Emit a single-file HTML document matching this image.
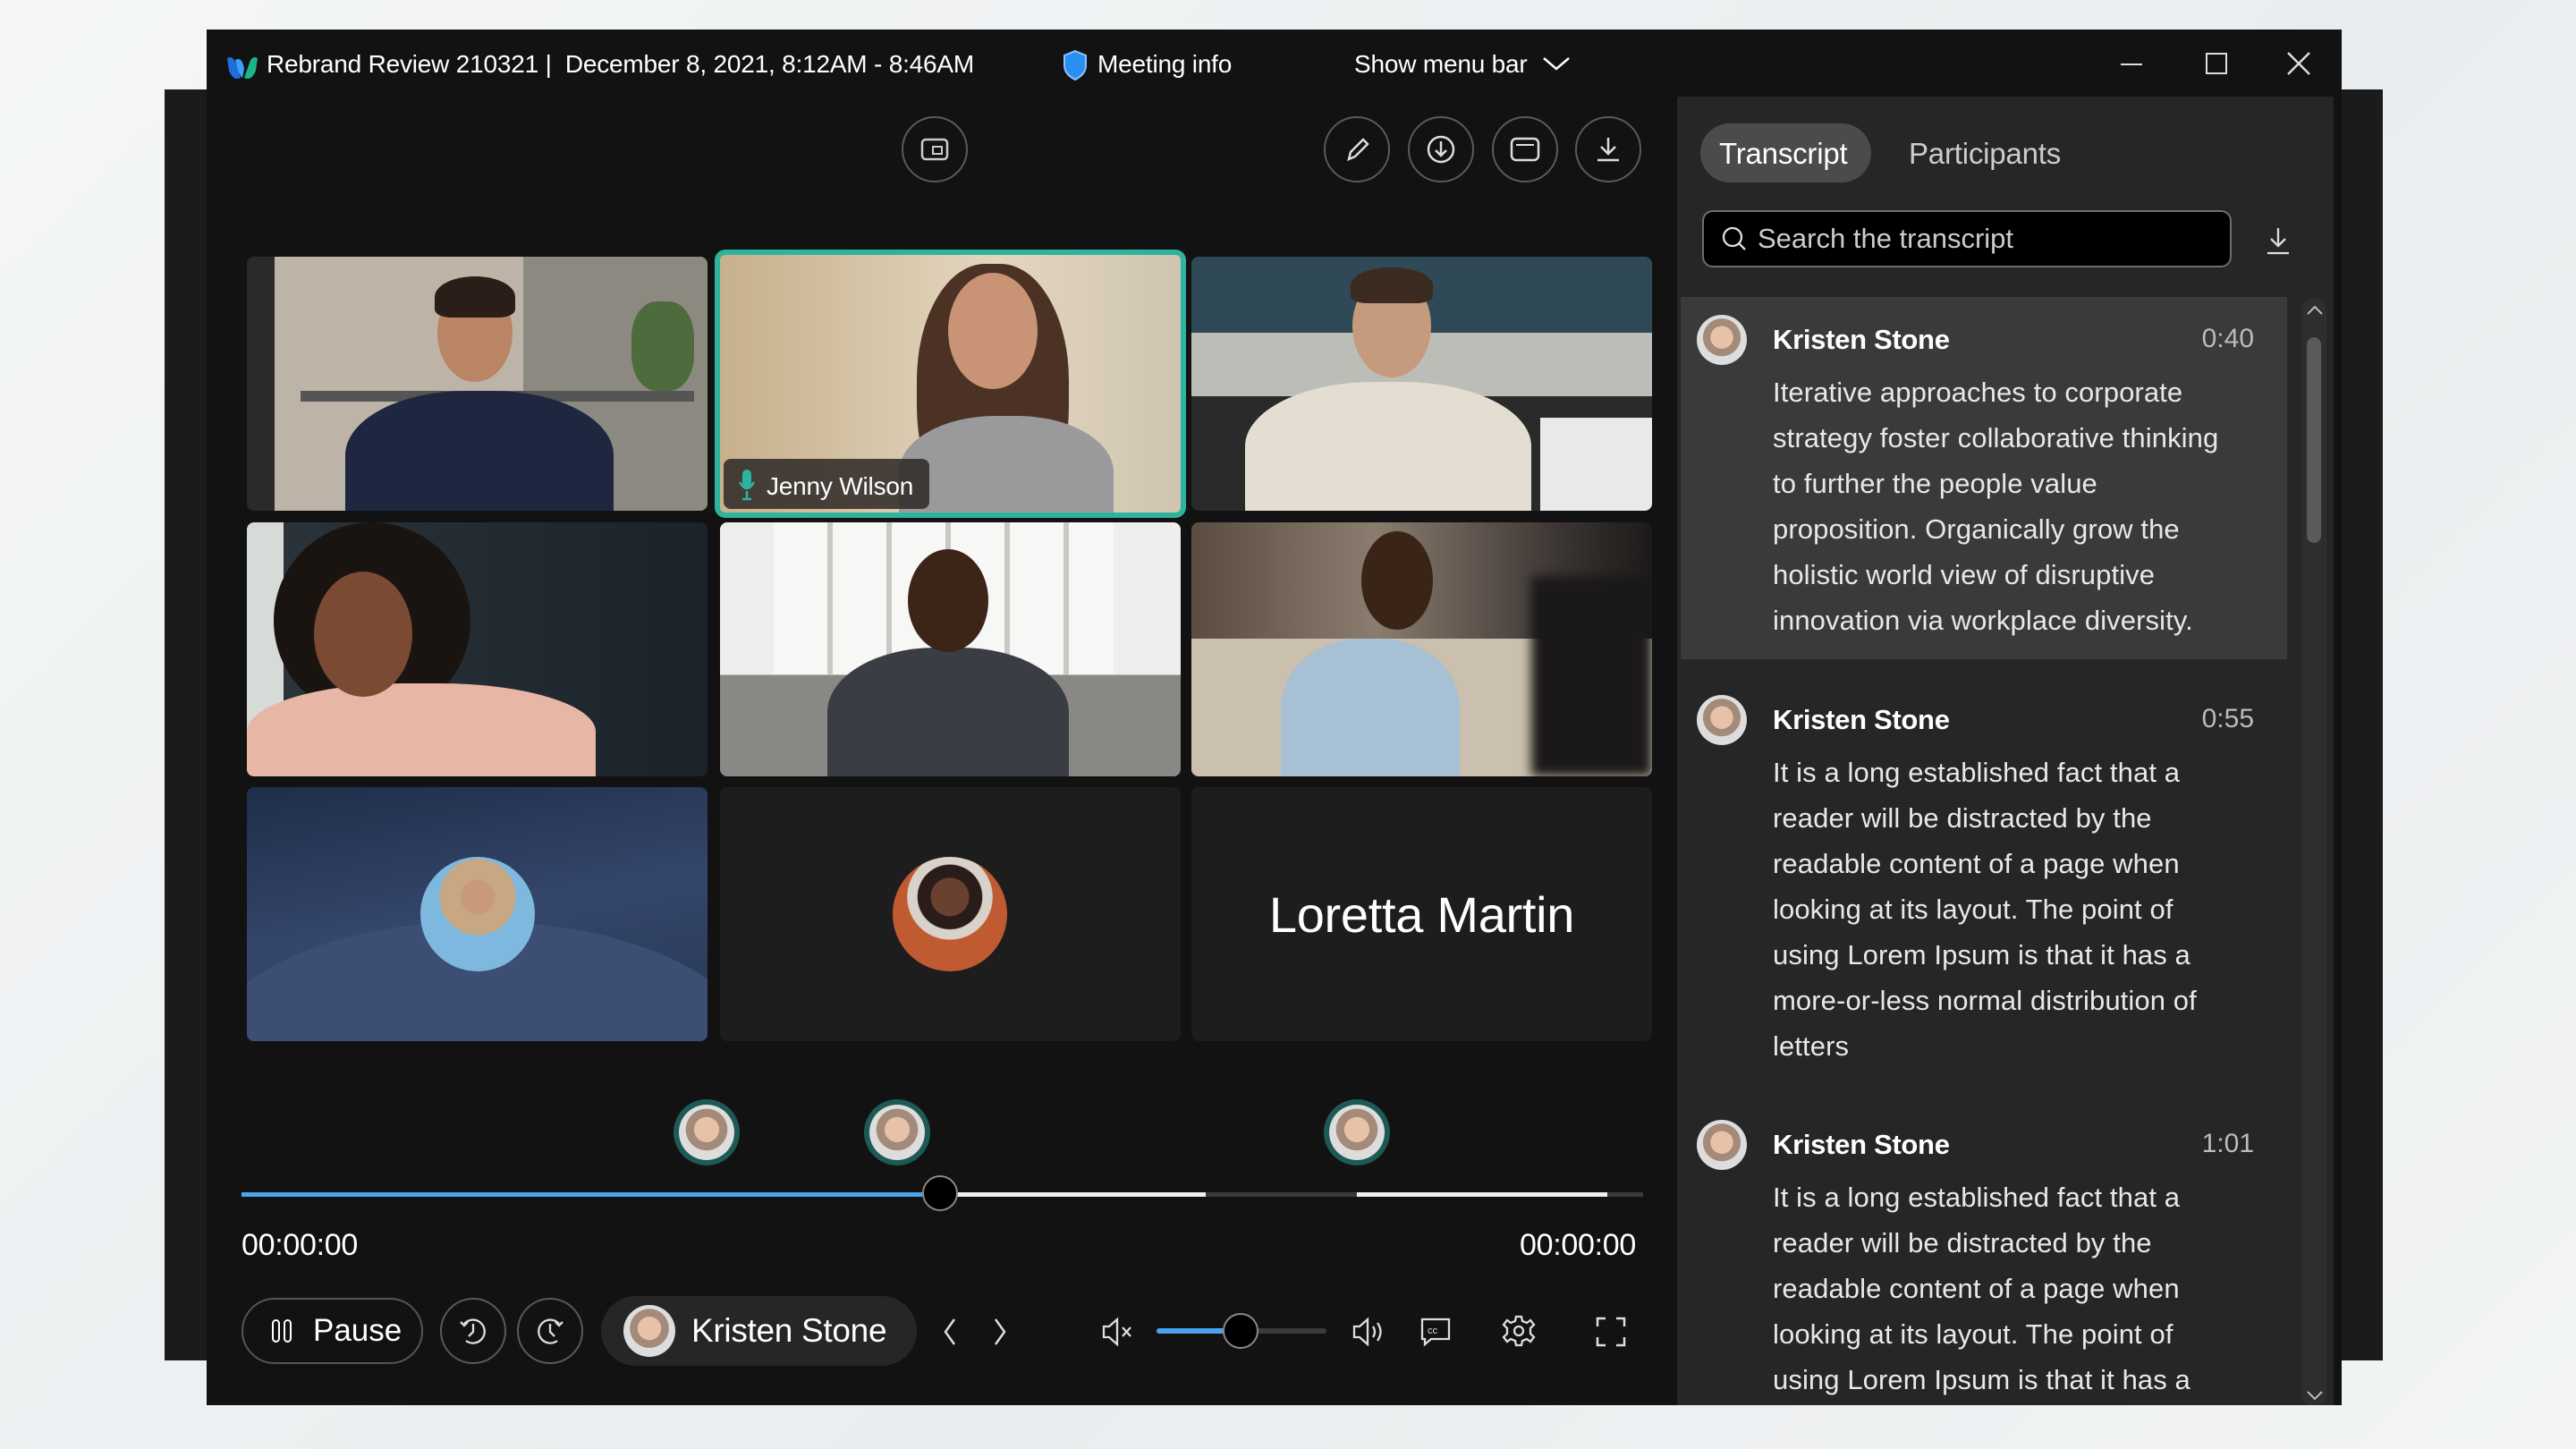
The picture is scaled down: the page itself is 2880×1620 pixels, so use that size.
<!DOCTYPE html>
<html><head><meta charset="utf-8"><style>
*{box-sizing:border-box;margin:0;padding:0}
body{width:2880px;height:1620px;overflow:hidden;background:linear-gradient(135deg,#f4f6f7,#e9edef 60%,#f2f4f5);font-family:"Liberation Sans",sans-serif;color:#fff;position:relative}
.abs{position:absolute}
.back{left:184px;top:100px;width:2480px;height:1421px;background:#1b1b1b}
.win{left:231px;top:33px;width:2387px;height:1538px;background:#121212}
.tb{font-size:28px;top:23px;white-space:nowrap;letter-spacing:-0.2px}
.cbtn{width:74px;height:74px;border:2px solid #5a5a5a;border-radius:50%;display:flex;align-items:center;justify-content:center}
.tile{width:515px;height:284px;border-radius:8px;overflow:hidden;position:absolute}
.head{position:absolute;border-radius:50%}
.body{position:absolute;border-radius:45% 45% 0 0}
.panel{left:1644px;top:75px;width:734px;height:1463px;background:#262626;overflow:hidden}
.name{font-weight:bold;font-size:31px;position:absolute;left:107px;letter-spacing:-0.3px}
.time{position:absolute;right:89px;font-size:30px;color:#bbb}
.txt{position:absolute;left:107px;font-size:31px;line-height:51px;color:#e8e8e8;white-space:nowrap;letter-spacing:0.1px}
.av{position:absolute;left:22px;width:56px;height:56px;border-radius:50%;background:radial-gradient(circle at 50% 45%,#e8c2a8 0 30%,#a48a78 31% 50%,#ddd 51%)}
.tav{position:absolute;width:74px;height:74px;border-radius:50%;background:#1d5a56;padding:6px}
.tav div{width:100%;height:100%;border-radius:50%;background:radial-gradient(circle at 50% 45%,#e8c2a8 0 30%,#a48a78 31% 50%,#ddd 51%)}
</style></head><body>
<div class="abs back"></div>
<div class="abs win">
 <svg class="abs" style="left:20px;top:26px" width="40" height="34" viewBox="0 0 40 34"><path d="M3 6 Q10 2 13 14 L18 28 Q10 32 5 20Z" fill="#1f6fe0"/><path d="M37 6 Q30 2 27 14 L22 28 Q30 32 35 20Z" fill="#1bb58a"/><path d="M12 8 Q20 4 22 18 L20 28 Q15 24 12 8Z" fill="#3aa0ff"/></svg>
 <div class="abs tb" style="left:67px">Rebrand Review 210321 | &nbsp;December 8, 2021, 8:12AM - 8:46AM</div>
 <svg class="abs" style="left:957px;top:22px" width="28" height="36" viewBox="0 0 28 36"><path d="M14 2 L26 7 V18 Q26 28 14 34 Q2 28 2 18 V7Z" fill="#2b8ff0" stroke="#8cc4ff" stroke-width="2"/></svg>
 <div class="abs tb" style="left:996px">Meeting info</div>
 <div class="abs tb" style="left:1283px">Show menu bar</div>
 <svg class="abs" style="left:1493px;top:28px" width="32" height="20"><path d="M2 4 L16 16 L30 4" stroke="#fff" stroke-width="2.5" fill="none"/></svg>
 <div class="abs" style="left:2140px;top:38px;width:24px;height:2px;background:#ddd"></div>
 <div class="abs" style="left:2235px;top:26px;width:24px;height:24px;border:2px solid #ddd"></div>
 <svg class="abs" style="left:2326px;top:25px" width="26" height="26"><path d="M1 1 L25 25 M25 1 L1 25" stroke="#ddd" stroke-width="2.5"/></svg>
 <div class="abs cbtn" style="left:777px;top:97px"><svg width="34" height="30"><rect x="3" y="4" width="28" height="22" rx="4" stroke="#ccc" stroke-width="2.5" fill="none"/><rect x="15" y="12" width="10" height="8" stroke="#ccc" stroke-width="2" fill="none"/></svg></div>
 <div class="abs cbtn" style="left:1249px;top:97px"><svg width="34" height="34"><path d="M8 28 L10 20 L24 6 L29 11 L15 25Z" stroke="#ddd" stroke-width="2.5" fill="none"/></svg></div>
 <div class="abs cbtn" style="left:1343px;top:97px"><svg width="36" height="36"><circle cx="18" cy="18" r="14" stroke="#ddd" stroke-width="2.5" fill="none"/><path d="M18 9 V25 M12 19 L18 25 L24 19" stroke="#ddd" stroke-width="2.5" fill="none"/></svg></div>
 <div class="abs cbtn" style="left:1437px;top:97px"><svg width="36" height="30"><rect x="3" y="3" width="30" height="24" rx="5" stroke="#ddd" stroke-width="2.5" fill="none"/><path d="M8 10 H28" stroke="#ddd" stroke-width="2"/></svg></div>
 <div class="abs cbtn" style="left:1530px;top:97px"><svg width="34" height="34"><path d="M17 4 V22 M9 14 L17 22 L25 14 M5 29 H29" stroke="#ddd" stroke-width="2.5" fill="none"/></svg></div>

 <div class="tile" style="left:45px;top:254px;background:linear-gradient(90deg,#2b2a28 0 6%,#bdb3a6 6% 60%,#8c8a80 60% 100%)">
  <div class="abs" style="left:60px;top:150px;width:440px;height:12px;background:#555"></div>
  <div class="abs" style="left:430px;top:50px;width:70px;height:100px;background:#4d6b3c;border-radius:40%"></div>
  <div class="body" style="left:110px;top:150px;width:300px;height:160px;background:#1f2640"></div>
  <div class="head" style="left:213px;top:30px;width:84px;height:110px;background:#b98565"></div>
  <div class="head" style="left:210px;top:22px;width:90px;height:46px;background:#2a1e18;border-radius:50% 50% 20% 20%"></div>
 </div>
 <div class="tile" style="left:568px;top:246px;width:527px;height:300px;border:6px solid #2eb39f;border-radius:12px;background:linear-gradient(90deg,#c7b08c,#e3d6bf 60%,#cfc5b0)">
  <div class="head" style="left:220px;top:10px;width:170px;height:290px;background:#4c3224;border-radius:45%"></div>
  <div class="body" style="left:200px;top:180px;width:240px;height:140px;background:#9a9a9c"></div>
  <div class="head" style="left:255px;top:20px;width:100px;height:130px;background:#c99476"></div>
  <div class="abs" style="left:4px;top:228px;width:230px;height:56px;background:rgba(45,40,38,.85);border-radius:8px"></div>
  <svg class="abs" style="left:20px;top:238px" width="20" height="38"><rect x="5" y="2" width="10" height="20" rx="5" fill="#2eb39f"/><path d="M2 16 Q10 30 18 16 M10 26 V34 M5 35 H15" stroke="#2eb39f" stroke-width="2.5" fill="none"/></svg>
  <div class="abs" style="left:52px;top:243px;font-size:28px;letter-spacing:-0.2px">Jenny Wilson</div>
 </div>
 <div class="tile" style="left:1101px;top:254px;background:linear-gradient(180deg,#2f4a56 0 30%,#bdbdb8 30% 55%,#2b2a2a 55%)">
  <div class="abs" style="left:390px;top:180px;width:125px;height:104px;background:#e9e9e9"></div>
  <div class="body" style="left:60px;top:140px;width:320px;height:160px;background:#e4ded2"></div>
  <div class="head" style="left:180px;top:20px;width:88px;height:115px;background:#c69a7c"></div>
  <div class="head" style="left:178px;top:12px;width:92px;height:40px;background:#3a2a20;border-radius:50% 50% 20% 20%"></div>
 </div>
 <div class="tile" style="left:45px;top:551px;background:linear-gradient(90deg,#d7dbd8 0 8%,#2a333a 8%,#1b232a)">
  <div class="head" style="left:30px;top:0;width:220px;height:220px;background:#1a1410"></div>
  <div class="body" style="left:0;top:180px;width:390px;height:120px;background:#e8b6a4"></div>
  <div class="head" style="left:75px;top:55px;width:110px;height:140px;background:#7a4a32"></div>
 </div>
 <div class="tile" style="left:574px;top:551px;background:linear-gradient(180deg,#eeeeec 0 60%,#8a8885 60%)">
  <div class="abs" style="left:60px;top:0;width:380px;height:170px;background:repeating-linear-gradient(90deg,#f7f7f5 0 60px,#c8c8c4 60px 66px)"></div>
  <div class="body" style="left:120px;top:140px;width:270px;height:160px;background:#3a3d44"></div>
  <div class="head" style="left:210px;top:30px;width:90px;height:115px;background:#3d2418"></div>
 </div>
 <div class="tile" style="left:1101px;top:551px;background:linear-gradient(90deg,#5a4c40,#8a7c6e 40%,#3b3533 80%,#1c1a19)">
  <div class="abs" style="left:0;top:130px;width:515px;height:154px;background:#cbbfae"></div>
  <div class="abs" style="left:380px;top:60px;width:135px;height:224px;background:#1a1818;filter:blur(6px)"></div>
  <div class="body" style="left:100px;top:130px;width:200px;height:170px;background:#a8c0d4"></div>
  <div class="head" style="left:190px;top:10px;width:80px;height:110px;background:#3a2418"></div>
 </div>
 <div class="tile" style="left:45px;top:847px;background:linear-gradient(170deg,#1e2e4a,#34466a 50%,#263754)">
  <div class="abs" style="left:-50px;top:150px;width:620px;height:300px;border-radius:50%;background:#3c4e74"></div>
  <div class="head" style="left:194px;top:78px;width:128px;height:128px;background:radial-gradient(circle at 50% 35%,#c89a7a 0 18%,#c8a882 19% 40%,#7fb8de 41%)"></div>
 </div>
 <div class="tile" style="left:574px;top:847px;background:#1d1d1d">
  <div class="head" style="left:193px;top:78px;width:128px;height:128px;background:radial-gradient(circle at 50% 35%,#6a4030 0 20%,#2a1c18 21% 34%,#d8d2ca 35% 45%,#c05a30 46%)"></div>
 </div>
 <div class="tile" style="left:1101px;top:847px;background:#1d1d1d;display:flex;align-items:center;justify-content:center;font-size:56px;letter-spacing:-0.3px">Loretta Martin</div>

 <div class="tav" style="left:522px;top:1196px"><div></div></div>
 <div class="tav" style="left:735px;top:1196px"><div></div></div>
 <div class="tav" style="left:1249px;top:1196px"><div></div></div>
 <div class="abs" style="left:39px;top:1300px;width:1567px;height:5px;background:#3a3a3a"></div>
 <div class="abs" style="left:39px;top:1300px;width:783px;height:5px;background:#4aa3ee"></div>
 <div class="abs" style="left:822px;top:1300px;width:295px;height:5px;background:#eee"></div>
 <div class="abs" style="left:1286px;top:1300px;width:280px;height:5px;background:#eee"></div>
 <div class="abs" style="left:800px;top:1281px;width:40px;height:40px;border-radius:50%;background:#000;border:2px solid #888"></div>
 <div class="abs" style="left:39px;top:1340px;font-size:34px;letter-spacing:-0.3px">00:00:00</div>
 <div class="abs" style="left:1468px;top:1340px;font-size:34px;letter-spacing:-0.3px">00:00:00</div>

 <div class="abs" style="left:39px;top:1418px;width:203px;height:74px;border:2px solid #555;border-radius:37px;display:flex;align-items:center;padding-left:30px;font-size:35px">
  <svg width="28" height="30" style="margin-right:20px"><rect x="3" y="3" width="7" height="24" rx="3.5" stroke="#fff" stroke-width="2" fill="none"/><rect x="16" y="3" width="7" height="24" rx="3.5" stroke="#fff" stroke-width="2" fill="none"/></svg>Pause</div>
 <div class="abs cbtn" style="left:261px;top:1418px"><svg width="36" height="36"><path d="M8 10 A13 13 0 1 1 10 29 M4 8 L8 12 L12 8 M18 10 V19 L13 24" stroke="#ddd" stroke-width="2.3" fill="none"/></svg></div>
 <div class="abs cbtn" style="left:347px;top:1418px"><svg width="36" height="36"><path d="M28 10 A13 13 0 1 0 26 29 M32 8 L28 12 L24 8 M18 10 V19 L23 24" stroke="#ddd" stroke-width="2.3" fill="none"/></svg></div>
 <div class="abs" style="left:441px;top:1416px;width:353px;height:78px;background:#262626;border-radius:39px"></div>
 <div class="av" style="left:466px;top:1426px;width:58px;height:58px"></div>
 <div class="abs" style="left:542px;top:1434px;font-size:37px;letter-spacing:-0.3px">Kristen Stone</div>
 <svg class="abs" style="left:820px;top:1438px" width="80" height="36"><path d="M16 4 L6 18 L16 32 M62 4 L72 18 L62 32" stroke="#ddd" stroke-width="2.5" fill="none"/></svg>
 <svg class="abs" style="left:1000px;top:1438px" width="40" height="36"><path d="M3 12 H9 L18 4 V32 L9 24 H3Z" stroke="#ddd" stroke-width="2.3" fill="none"/><path d="M24 13 L33 23 M33 13 L24 23" stroke="#ddd" stroke-width="2.3"/></svg>
 <div class="abs" style="left:1062px;top:1452px;width:190px;height:6px;background:#3a3a3a;border-radius:3px"></div>
 <div class="abs" style="left:1062px;top:1452px;width:94px;height:6px;background:#4aa3ee;border-radius:3px"></div>
 <div class="abs" style="left:1136px;top:1435px;width:40px;height:40px;border-radius:50%;background:#000;border:2px solid #888"></div>
 <svg class="abs" style="left:1280px;top:1438px" width="40" height="36"><path d="M3 12 H9 L18 4 V32 L9 24 H3Z M24 12 Q28 18 24 24 M29 8 Q36 18 29 28" stroke="#ddd" stroke-width="2.3" fill="none"/></svg>
 <svg class="abs" style="left:1355px;top:1438px" width="40" height="36"><path d="M4 4 H34 V26 H14 L7 32 V26 H4Z" stroke="#ddd" stroke-width="2.3" fill="none"/><text x="10" y="20" font-size="11" fill="#ddd" font-family="Liberation Sans">cc</text></svg>
 <svg class="abs" style="left:1448px;top:1436px" width="38" height="38" viewBox="0 0 38 38"><circle cx="19" cy="19" r="5" stroke="#ddd" stroke-width="2.3" fill="none"/><path d="M16 3 H22 L23 8 L28 10 L32 7 L36 12 L32 16 V22 L36 26 L32 31 L28 28 L23 30 L22 35 H16 L15 30 L10 28 L6 31 L2 26 L6 22 V16 L2 12 L6 7 L10 10 L15 8Z" stroke="#ddd" stroke-width="2.3" fill="none"/></svg>
 <svg class="abs" style="left:1552px;top:1438px" width="36" height="36"><path d="M3 12 V3 H12 M24 3 H33 V12 M33 24 V33 H24 M12 33 H3 V24" stroke="#ddd" stroke-width="2.5" fill="none"/></svg>

 <div class="abs panel">
  <div class="abs" style="left:26px;top:30px;width:191px;height:66px;background:#4b4b4b;border-radius:33px"></div>
  <div class="abs" style="left:47px;top:45px;font-size:33px;letter-spacing:-0.2px">Transcript</div>
  <div class="abs" style="left:259px;top:45px;font-size:33px;color:#ccc;letter-spacing:-0.2px">Participants</div>
  <div class="abs" style="left:28px;top:127px;width:592px;height:64px;background:#000;border:2px solid #6e6e6e;border-radius:12px"></div>
  <svg class="abs" style="left:48px;top:143px" width="32" height="32"><circle cx="14" cy="14" r="10" stroke="#ddd" stroke-width="2.3" fill="none"/><path d="M21 21 L28 28" stroke="#ddd" stroke-width="2.3"/></svg>
  <div class="abs" style="left:90px;top:141px;font-size:31px;color:#ccc;letter-spacing:0px">Search the transcript</div>
  <svg class="abs" style="left:656px;top:145px" width="32" height="34"><path d="M16 2 V22 M8 14 L16 22 L24 14 M4 30 H28" stroke="#ddd" stroke-width="2.3" fill="none"/></svg>

  <div class="abs" style="left:4px;top:224px;width:678px;height:405px;background:#3a3a3a"></div>
  <div class="abs" style="left:698px;top:225px;width:28px;height:1240px;background:#2e2e2e;border-radius:14px"></div>
  <svg class="abs" style="left:702px;top:231px" width="22" height="16"><path d="M3 12 L11 4 L19 12" stroke="#bbb" stroke-width="2" fill="none"/></svg>
  <svg class="abs" style="left:702px;top:1444px" width="22" height="16"><path d="M3 4 L11 12 L19 4" stroke="#bbb" stroke-width="2" fill="none"/></svg>
  <div class="abs" style="left:704px;top:269px;width:16px;height:230px;background:#5a5a5a;border-radius:8px"></div>

  <div class="av" style="top:244px"></div>
  <div class="name" style="top:254px">Kristen Stone</div>
  <div class="time" style="top:254px">0:40</div>
  <div class="txt" style="top:305px">Iterative approaches to corporate<br>strategy foster collaborative thinking<br>to further the people value<br>proposition. Organically grow the<br>holistic world view of disruptive<br>innovation via workplace diversity.</div>

  <div class="av" style="top:669px"></div>
  <div class="name" style="top:679px">Kristen Stone</div>
  <div class="time" style="top:679px">0:55</div>
  <div class="txt" style="top:730px">It is a long established fact that a<br>reader will be distracted by the<br>readable content of a page when<br>looking at its layout. The point of<br>using Lorem Ipsum is that it has a<br>more-or-less normal distribution of<br>letters</div>

  <div class="av" style="top:1144px"></div>
  <div class="name" style="top:1154px">Kristen Stone</div>
  <div class="time" style="top:1154px">1:01</div>
  <div class="txt" style="top:1205px">It is a long established fact that a<br>reader will be distracted by the<br>readable content of a page when<br>looking at its layout. The point of<br>using Lorem Ipsum is that it has a<br>more-or-less normal distribution</div>
 </div>
</div>
</body></html>
